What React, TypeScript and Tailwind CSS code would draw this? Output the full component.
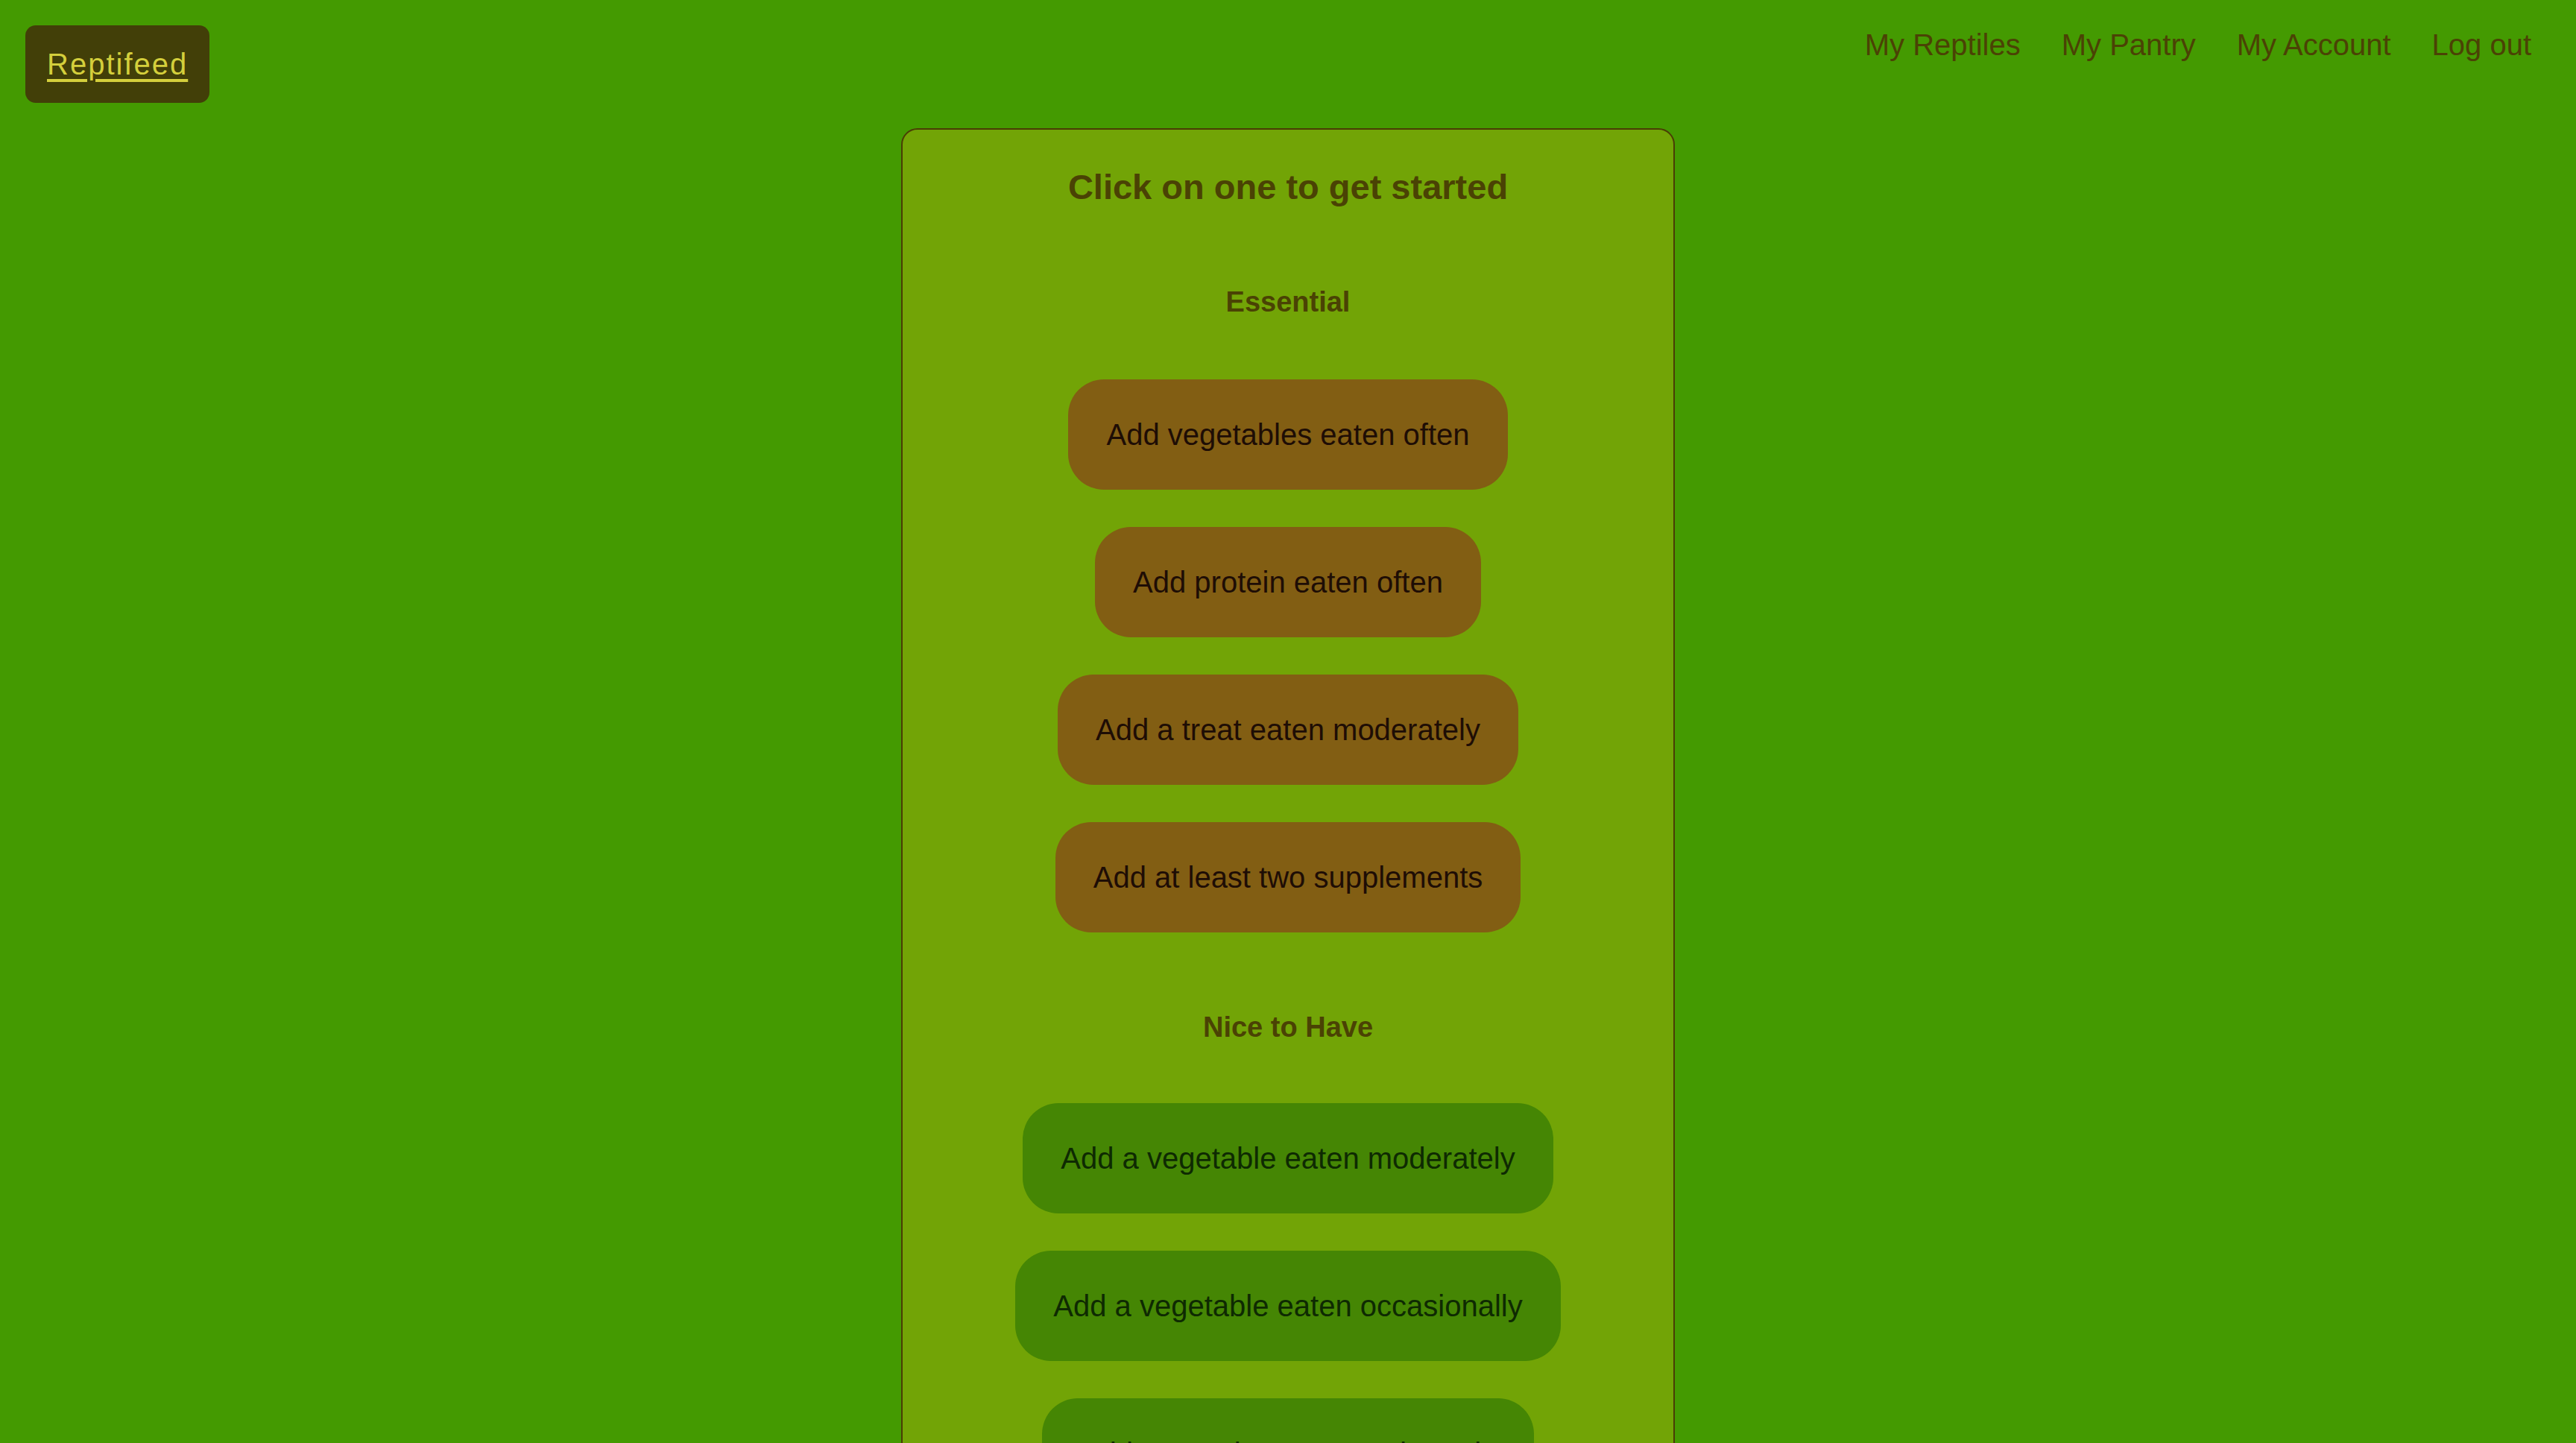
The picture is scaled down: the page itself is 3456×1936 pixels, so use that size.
import React from "react";

const essential = [
  "Add vegetables eaten often",
  "Add protein eaten often",
  "Add a treat eaten moderately",
  "Add at least two supplements",
];

const niceToHave = [
  "Add a vegetable eaten moderately",
  "Add a vegetable eaten occasionally",
  "Add a protein eaten moderately",
];

export default function App() {
  return (
    <div
      className="min-h-screen bg-[#449a01] pb-10"
      style={{ fontFamily: '"Liberation Sans", Arial, sans-serif' }}
    >
      <header className="flex items-start justify-between px-[34px] pt-[34px]">
        <a
          href="#"
          className="rounded-[14px] bg-[#423f08] px-[29px] py-[29px] text-[40px] leading-[46px] tracking-[2px] text-[#d4cf3c] underline decoration-[4px] underline-offset-[6px]"
        >
          Reptifeed
        </a>
        <nav className="flex gap-[55px] pt-[3px] pr-[26px] text-[40px] leading-[46px] text-[#4b4205]">
          <a href="#">My Reptiles</a>
          <a href="#">My Pantry</a>
          <a href="#">My Account</a>
          <a href="#">Log out</a>
        </nav>
      </header>

      <main className="flex justify-center pt-[34px]">
        <div className="flex w-[1038px] flex-col items-center rounded-[22px] border-2 border-[#4a3d05] bg-[#72a406] pt-[49px] pb-[60px]">
          <h2 className="text-[47px] font-bold leading-[56px] text-[#4a4204]">
            Click on one to get started
          </h2>

          <h3 className="mt-[103px] text-[38px] font-bold leading-[46px] text-[#4a4204]">
            Essential
          </h3>
          <div className="mt-[81px] flex flex-col items-center gap-[50px]">
            {essential.map((label) => (
              <button
                key={label}
                className="rounded-[48px] bg-[#825e13] px-[51px] py-[51px] text-[40px] leading-[46px] text-[#1e0d05]"
              >
                {label}
              </button>
            ))}
          </div>

          <h3 className="mt-[104px] text-[38px] font-bold leading-[46px] text-[#4a4204]">
            Nice to Have
          </h3>
          <div className="mt-[79px] flex flex-col items-center gap-[50px]">
            {niceToHave.map((label) => (
              <button
                key={label}
                className="rounded-[48px] bg-[#458604] px-[51px] py-[51px] text-[40px] leading-[46px] text-[#0e2a02]"
              >
                {label}
              </button>
            ))}
          </div>
        </div>
      </main>
    </div>
  );
}
